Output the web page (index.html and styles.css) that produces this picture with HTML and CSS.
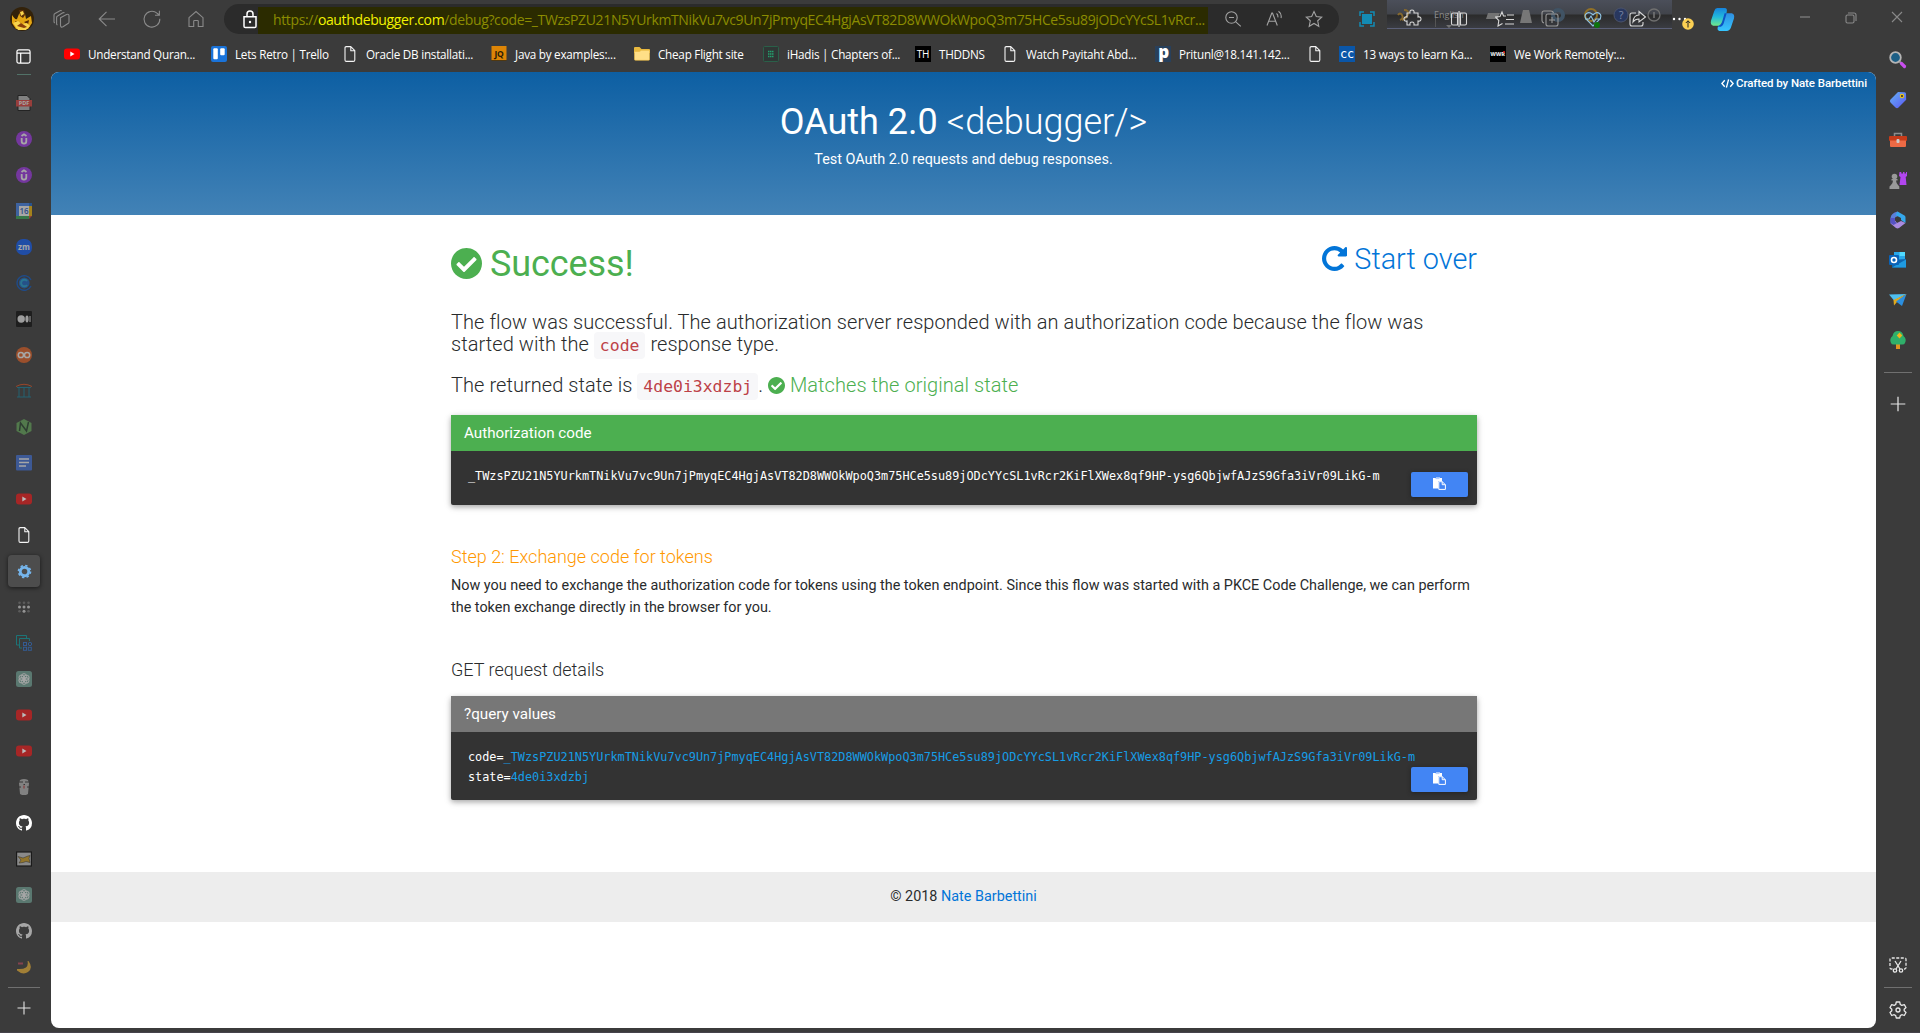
FILE: index.html
```html
<!DOCTYPE html>
<html lang="en">
<head>
<meta charset="utf-8">
<title>OAuth 2.0 debugger</title>
<link rel="stylesheet" href="styles.css">
</head>
<body>
<svg class="defs" width="0" height="0">
  <symbol id="check" viewBox="8 8 496 496"><path d="M504 256c0 136.967-111.033 248-248 248S8 392.967 8 256 119.033 8 256 8s248 111.033 248 248zM227.314 387.314l184-184c6.248-6.248 6.248-16.379 0-22.627l-22.627-22.627c-6.248-6.249-16.379-6.249-22.628 0L216 308.118l-70.059-70.059c-6.248-6.248-16.379-6.248-22.628 0l-22.627 22.627c-6.248 6.248-6.248 16.379 0 22.627l104 104c6.249 6.249 16.379 6.249 22.628.001z"/></symbol>
  <symbol id="repeat" viewBox="128 128 1536 1536"><path d="M1664 256v448q0 26-19 45t-45 19h-448q-42 0-59-40-17-39 14-69l138-138q-148-137-349-137-104 0-198.500 40.500t-163.500 109.500-109.500 163.500-40.500 198.500 40.500 198.500 109.500 163.500 163.500 109.500 198.500 40.500q119 0 225-52t179-147q7-10 23-12 15 0 25 9l137 138q9 8 9.500 20.500t-7.500 22.500q-109 132-264 204.500t-327 72.500q-156 0-298-61t-245-164-164-245-61-298 61-298 164-245 245-164 298-61q147 0 284.500 55.500t244.500 156.500l130-129q29-31 70-14 39 17 39 59z"/></symbol>
  <symbol id="paste" viewBox="0 0 13 13"><path fill="#fff" d="M0 1h3V.4h4V1h2v3H5.500v7.500H0z"/><path fill="#9fc3ff" d="M2.500 1.200h4v.9h-4z"/><path fill="#4285f4" stroke="#fff" d="M5.800 4.700h3.400l3.200 3v4.700H5.800z"/><path fill="none" stroke="#fff" d="M9.200 4.700v3h3.200"/></symbol>
  <symbol id="doc" viewBox="0 0 16 16"><path fill="none" stroke="#f4f4f4" stroke-width="1.100" stroke-linejoin="round" d="M3.500.6h5.300l4 4v9.300q0 1.500-1.500 1.500h-7Q3 15.400 3 13.900V2Q3 .6 4.300.6M8.800.8v3.900h3.900"/></symbol>
  <symbol id="yt" viewBox="0 0 16 16"><rect y="2.500" width="16" height="11" rx="3"/><path fill="#fff" d="m6.300 5.600 4.200 2.400-4.200 2.400z"/></symbol>
  <symbol id="udemy" viewBox="0 0 16 16"><circle cx="8" cy="8" r="8" fill="#a435f0"/><path fill="none" stroke="#fff" stroke-width="1.800" d="M5.700 7v3.300q0 2.300 2.300 2.300t2.300-2.300V7M5.500 5 8 3.300 10.500 5"/></symbol>
  <symbol id="github" viewBox="0 0 16 16"><path d="M8 0C3.580 0 0 3.580 0 8c0 3.540 2.290 6.530 5.470 7.590.4.070.550-.170.550-.380 0-.190-.010-.820-.010-1.490-2.010.370-2.530-.490-2.690-.940-.090-.230-.480-.940-.820-1.130-.280-.150-.680-.520-.010-.530.630-.010 1.080.580 1.230.820.720 1.210 1.870.870 2.330.660.070-.520.280-.870.510-1.070-1.780-.200-3.640-.890-3.640-3.950 0-.870.310-1.590.820-2.150-.080-.200-.360-1.020.080-2.120 0 0 .670-.210 2.200.820.640-.180 1.320-.270 2-.270s1.360.090 2 .270c1.530-1.040 2.200-.820 2.200-.820.440 1.100.160 1.920.080 2.120.510.560.820 1.270.820 2.150 0 3.070-1.870 3.750-3.650 3.950.290.250.540.730.540 1.480 0 1.070-.010 1.930-.010 2.200 0 .210.150.460.550.380A8.010 8.010 0 0 0 16 8c0-4.420-3.580-8-8-8z"/></symbol>
  <symbol id="gpt" viewBox="0 0 16 16"><rect width="16" height="16" rx="2.500" fill="#74aa9c"/><g fill="none" stroke="#fff" stroke-width=".9"><ellipse cx="8" cy="5.600" rx="2.600" ry="3"/><ellipse cx="8" cy="5.600" rx="2.600" ry="3" transform="rotate(60 8 8)"/><ellipse cx="8" cy="5.600" rx="2.600" ry="3" transform="rotate(120 8 8)"/><ellipse cx="8" cy="5.600" rx="2.600" ry="3" transform="rotate(180 8 8)"/><ellipse cx="8" cy="5.600" rx="2.600" ry="3" transform="rotate(240 8 8)"/><ellipse cx="8" cy="5.600" rx="2.600" ry="3" transform="rotate(300 8 8)"/></g></symbol>
  <symbol id="plus" viewBox="0 0 16 16"><path fill="none" stroke="#e4e4e4" stroke-width="1.100" d="M8 1.500v13M1.500 8h13"/></symbol>
</svg>

<header class="toolbar">
  <div class="nav">
    <svg class="avatar" viewBox="0 0 24 24"><circle cx="12" cy="12" r="12" fill="#33220a"/><path fill="#e4a613" d="M2 8q3 5 5 4l2-5q3-4 6 0l1 5 5-3 1 7-4 6H6l-4-6z"/><path fill="#5b2c08" d="M9 3h5l1 5-2 3-3-2zM5 14l6 2-3 3zM14 15l5-2-1 5z"/><path fill="#f8d44c" d="m10 5 3-1 1 3-3 2zM3 16l5-2 4 3 5-1 3 3-4 4H8z"/><path fill="#8a3f0a" d="m7 19 4-3 6 4-3 1z"/></svg>
    <svg class="ico dim" viewBox="0 0 20 20"><path d="m3 4.500 5-2.800q1-.5 1.800.2M3 4.500Q2 5 2 6v6.500q0 1 .8 1.500M5.600 7l5.200-3.200q1-.5 1.700.1M5.600 7q-1 .5-1 1.500v6q0 1 .8 1.600M8.500 8.800l6-3.400q2.500-.8 2.500 1.500v6q0 1-1 1.600L11 17.800q-2.500 1-2.500-1.500z"/></svg>
    <svg class="ico dim" viewBox="0 0 20 20"><path d="M18 10H2.300M9.500 2.800 2.200 10l7.300 7.200"/></svg>
    <svg class="ico dim" viewBox="0 0 20 20"><path d="M17.800 9.800A7.900 7.900 0 1 1 15 4.200l2 1.600M17.400 1.800v4.400H13"/></svg>
    <svg class="ico dim" viewBox="0 0 20 20"><path d="m3 8.700 7-6.200 7 6.200v8.800h-4.700v-5.200q0-.8-.8-.8H8.500q-.8 0-.8.8v5.200H3z"/></svg>
  </div>
  <div class="address">
    <svg class="lock" viewBox="0 0 16 20"><path fill="none" stroke="#fff" stroke-width="1.500" d="M2 7.700h12v9.500q0 1.300-1.300 1.300H3.300Q2 18.500 2 17.200zM5 7.500V5a3 3 0 0 1 6 0v2.500"/><circle cx="8" cy="13" r="1.200" fill="#fff"/></svg>
    <div class="url">https://<b>oauthdebugger.com</b>/debug?code=_TWzsPZU21N5YUrkmTNikVu7vc9Un7jPmyqEC4HgjAsVT82D8WWOkWpoQ3m75HCe5su89jODcYYcSL1vRcr...</div>
    <div class="tools">
      <svg class="ico mid" viewBox="0 0 20 20"><circle cx="8.500" cy="8.500" r="5.700"/><path d="m12.800 12.800 5 4.500M6 8.500h5"/></svg>
      <svg class="ico mid" viewBox="0 0 20 20"><path d="M3 16.500 7.800 4h.7l4.800 12.500M4.700 12.300h7M12.500 4.500q1.800 1.500 1.300 3.800M14.500 2.300q3.500 2.500 2.500 6.700"/></svg>
      <svg class="ico mid" viewBox="0 0 20 20"><path d="m10 2.500 2.300 5 5.400.6-4 3.700 1.100 5.500-4.800-2.800-4.800 2.800 1.100-5.500-4-3.700 5.400-.6z"/></svg>
    </div>
  </div>
  <div class="actions">
    <svg class="ico" viewBox="0 0 20 20"><rect x="5" y="5" width="10" height="10" fill="#138bb4"/><path stroke="#138bb4" stroke-width="1.500" d="M3 7V3h4M13 3h4v4M17 13v4h-4M7 17H3v-4"/></svg>
    <svg class="ico lit" viewBox="0 0 20 20"><path d="M5 4h3q-.5-3 2-3t2 3h4v4q3-.6 3 2t-3 2v4h-4q.5-3-2-3t-2 3H5v-4q-3 .5-3-2t3-2z"/></svg>
    <svg class="ico lit" viewBox="0 0 20 20"><path d="M8.500 4H4Q2.500 4 2.500 5.500v9Q2.500 16 4 16h4.500zM11.500 4H16q1.500 0 1.500 1.500v9q0 1.500-1.500 1.500h-4.500zM10 2v16"/></svg>
    <svg class="ico lit" viewBox="0 0 20 20"><path d="M11 7H8.500L7 3 5 7.500l-4.500.6 3.300 3.400L3 17l4.500-2.500M12 6h7M11 10.500h8M10 15h9"/></svg>
    <svg class="ico soft" viewBox="0 0 20 20"><path d="M8 5h8q2 0 2 2v8q0 2-2 2H8q-2 0-2-2V7q0-2 2-2zM12 8v6M9 11h6M4 14q-2-.5-2-2.500V4q0-2 2-2h7q2 0 2.500 2"/></svg>
    <svg class="ico lit" viewBox="0 0 20 20"><path d="M10 17 3 10Q.8 6.500 3.500 4.500T9 5l1 1 1-1q3-2.500 5.500-.5T17 10zM2 10h4l2-3 3 6 2-3h5" stroke="#8fc4e4"/><circle cx="14" cy="16" r="3" fill="#0d720d" stroke="none"/></svg>
    <svg class="ico lit" viewBox="0 0 20 20"><path d="M9 4H5Q3 4 3 6v9q0 2 2 2h9q2 0 2-2v-2M12 2.500 18.500 8 12 13v-3q-4 0-6 3 .5-7 6-7z"/></svg>
    <svg class="ico" viewBox="0 0 20 20"><g fill="#fff"><circle cx="4" cy="10" r="1.200"/><circle cx="9.500" cy="10" r="1.200"/><circle cx="15" cy="10" r="1.200"/></g></svg>
    <svg class="copilot" viewBox="0 0 24 24"><defs><linearGradient id="cg" x1="0" y1="0" x2="0" y2="1"><stop offset="0" stop-color="#1683dd"/><stop offset=".5" stop-color="#22b9dc"/><stop offset="1" stop-color="#6fe88c"/></linearGradient><linearGradient id="cb" x1="0" y1="0" x2="0" y2="1"><stop offset="0" stop-color="#2f8fe0"/><stop offset="1" stop-color="#36c6ff"/></linearGradient></defs><path fill="url(#cg)" d="M7 1h7q3 0 2 4l-3 10q-1 3-4 3H3q-3-1-2-5l3-9q1-3 3-3z"/><path fill="url(#cb)" d="M15 6h6q3 1 2 5l-3 9q-1 3-4 3H9q-3-1-1-5h2q2 0 3-4z"/><path fill="#0b53c5" d="m14 6 2 0-3 10q-1 3-4 3H7q4-2 5-6z"/></svg>
    <span></span>
    <svg class="ico dim" viewBox="0 0 20 20"><path d="M5 8h10"/></svg>
    <svg class="ico dim" viewBox="0 0 20 20"><path d="M7 4h6q2 0 2 2v6M6.500 6h5q1.500 0 1.500 1.500v5q0 1.500-1.500 1.500h-5Q5 14 5 12.500v-5Q5 6 6.500 6z"/></svg>
    <svg class="ico dim" viewBox="0 0 20 20"><path d="m5 3 10 10M15 3 5 13"/></svg>
  </div>
  <div class="imebar"><svg viewBox="0 0 285 29"><path fill="none" stroke="#87692d" stroke-width="2" d="M11 15q2-3 4 0t-2 5M17 10q5 0 4 4t-6 6"/><path stroke="#555" d="M48.500 15v12"/><path fill="#737373" d="M59 25h6l-3 3zM101 13h12l-3 6h-11z"/><path fill="#777" d="M136 10h6l1 4 2 9h-12l2-9z"/><g fill="none" stroke="#405364" stroke-width="4"><circle cx="171" cy="15" r="5"/></g><circle cx="204" cy="15" r="6" fill="none" stroke="#927126" stroke-width="2"/><circle cx="234" cy="15" r="7" fill="#28375f" stroke="#4b536b"/><circle cx="267" cy="15" r="6" fill="none" stroke="#707070" stroke-width="1.300"/><path stroke="#777" stroke-width="1.500" d="M267 12v6"/><text x="234" y="19" text-anchor="middle" font-family="Open Sans" font-size="11" fill="#7a86a6">?</text><text x="47" y="18" font-family="Open Sans" font-size="9" fill="#8a8a8a">English</text></svg></div>
  <svg class="badge" viewBox="0 0 12 12"><circle cx="6" cy="6" r="5.800" fill="#fcd053"/><path fill="none" stroke="#222" d="M6 9.500V2.800M3.800 5 6 2.800 8.200 5"/></svg>
</header>

<div class="window">
  <aside class="tabs">
    <svg class="toggle" viewBox="0 0 16 16"><path fill="none" stroke="#fff" stroke-width="1.300" d="M3 1h10q2 0 2 2v10q0 2-2 2H3q-2 0-2-2V3q0-2 2-2zM1 4.500h14M5 4.500V15"/></svg>
    <i class="mark"></i>
    <div class="tab"><svg viewBox="0 0 16 16"><path fill="#bbb" stroke="#111" d="M2 .5h9l3 3v12H2z"/><path fill="#e5413c" d="M0 5h16v6.500H0z"/><text x="8" y="10.200" text-anchor="middle" font-family="Open Sans" font-weight="700" font-size="5.500" fill="#fff">PDF</text></svg></div>
    <div class="tab"><svg><use href="#udemy"/></svg></div>
    <div class="tab"><svg><use href="#udemy"/></svg></div>
    <div class="tab"><svg viewBox="0 0 16 16"><path fill="#4285f4" d="M0 0h13v3H3v10H0z"/><path fill="#fbbc04" d="M13 3h3v10h-3z"/><path fill="#34a853" d="M0 13h13v3H0z"/><path fill="#1967d2" d="M13 0h3v3h-3z"/><path fill="#ea4335" d="M13 13h3l-3 3z"/><path fill="#fff" d="M3 3h10v10H3z"/><text x="8" y="11" text-anchor="middle" font-family="Open Sans" font-weight="600" font-size="8" fill="#1a56c4">16</text></svg></div>
    <div class="tab"><svg viewBox="0 0 16 16"><rect width="16" height="16" rx="7" fill="#0b5cff"/><text x="8" y="10.700" text-anchor="middle" font-family="Open Sans" font-weight="700" font-size="8" fill="#fff">zm</text></svg></div>
    <div class="tab"><svg viewBox="0 0 16 16"><path fill="none" stroke="#0a58c4" stroke-width="1.400" d="M15 5a7.300 7.300 0 1 0 0 6"/><circle cx="8.200" cy="8" r="5.400" fill="#1464c8"/><path fill="none" stroke="#1ba4d8" stroke-width="2" d="M11 6a3.300 3.300 0 1 0 0 4"/></svg></div>
    <div class="tab"><svg viewBox="0 0 16 16"><rect width="16" height="16" rx="1" fill="#080808"/><circle cx="5.200" cy="8" r="3.700" fill="#eee"/><ellipse cx="11" cy="8" rx="1.600" ry="3.400" fill="#eee"/><path stroke="#eee" d="M14 5v6"/></svg></div>
    <div class="tab"><svg viewBox="0 0 16 16"><circle cx="8" cy="8" r="8" fill="#eb6120"/><g fill="none" stroke="#fff" stroke-width="1.500"><circle cx="4.900" cy="8" r="2.600"/><circle cx="11.100" cy="8" r="2.600"/></g></svg></div>
    <div class="tab"><svg viewBox="0 0 16 16"><path fill="none" stroke="#e4511f" d="M0 3.500Q8-1 16 3.500"/><path fill="none" stroke="#13829f" d="M1 4.500h14M3 5v9M8 5v9M13 5v9M1 14h14"/></svg></div>
    <div class="tab"><svg viewBox="0 0 16 16"><path fill="#65ac5b" d="m8 0 7.500 4v8L8 16 .5 12V4z"/><path fill="none" stroke="#25402b" stroke-width="1.500" d="m3.500 12 1-8 6 8 2-9"/></svg></div>
    <div class="tab"><svg viewBox="0 0 16 16"><rect width="16" height="15.500" rx="1" fill="#3f72e0"/><path stroke="#fff" stroke-width="1.500" d="M3 4h10M3 7.500h10M3 11h7"/></svg></div>
    <div class="tab red"><svg><use href="#yt"/></svg></div>
    <div class="tab on"><svg><use href="#doc"/></svg></div>
    <div class="tab on sel"><svg viewBox="0 0 16 16"><circle cx="8" cy="8" r="4.500" fill="none" stroke="#75b5ec" stroke-width="3"/><circle cx="8" cy="8" r="6.400" fill="none" stroke="#75b5ec" stroke-width="1.800" stroke-dasharray="2.510"/></svg></div>
    <div class="tab"><svg viewBox="0 0 16 16"><g fill="#ddd"><circle cx="3.500" cy="8" r="1.500"/><circle cx="8" cy="8" r="1.500"/><circle cx="12.500" cy="8" r="1.500"/><circle cx="8" cy="12.300" r="1.500"/></g><g fill="#777"><circle cx="3.500" cy="3.700" r="1.300"/><circle cx="8" cy="3.700" r="1.300"/><circle cx="12.500" cy="3.700" r="1.300"/><circle cx="3.500" cy="12.300" r="1.300"/><circle cx="12.500" cy="12.300" r="1.300"/></g></svg></div>
    <div class="tab"><svg viewBox="0 0 16 16"><g fill="none"><path stroke="#04a4a8" d="M3 10H.5V.5h10V3M6 13H3.500V3.500h10V6"/><g stroke="#2f76d8"><rect x="7.500" y="7.500" width="3" height="3"/><rect x="7.500" y="12.300" width="3" height="3"/><circle cx="14" cy="9" r="1.700"/><rect x="12.300" y="12.300" width="3" height="3"/></g></g></svg></div>
    <div class="tab"><svg><use href="#gpt"/></svg></div>
    <div class="tab red"><svg><use href="#yt"/></svg></div>
    <div class="tab red"><svg><use href="#yt"/></svg></div>
    <div class="tab"><svg viewBox="0 0 16 16"><path fill="#bbb" d="M4 1q4-2 8 0l1 3-1 11-2 1H6l-2-1L3 4z"/><path stroke="#333" d="M3 3h4M9 3h4M7.500 5.500h1.500M2 8h3M11 8h3"/><path stroke="#c22" d="M8 6.500v3"/></svg></div>
    <div class="tab on gh"><svg><use href="#github"/></svg></div>
    <div class="tab"><svg viewBox="0 0 16 16"><rect x=".6" y="1" width="14.800" height="14" fill="#ccc" stroke="#000" stroke-width="1.200"/><path fill="#d9a520" stroke="#222" stroke-width=".5" d="m2 5.500 5 1.500 5-2 2-.5-1 3 1 4-4-1-3 1-4 .5 2-3z"/></svg></div>
    <div class="tab"><svg><use href="#gpt"/></svg></div>
    <div class="tab gh"><svg><use href="#github"/></svg></div>
    <div class="tab"><svg viewBox="0 0 16 16"><path fill="#f5b732" d="M12.500 2q5 7-.5 11-5 3.500-11-1.500v-1.500q6 .5 9-1.500 2.500-2.500 1.500-6.500z"/><path stroke="#c0485e" stroke-width="2" d="M2 4.500h5"/></svg></div>
    <i class="rule"></i>
    <svg class="add"><use href="#plus"/></svg>
  </aside>

  <div class="center">
    <nav class="bookmarks">
      <a class="yt"><svg><use href="#yt"/></svg><span>Understand Quran...</span></a>
      <a><svg viewBox="0 0 16 16"><rect width="16" height="16" rx="2" fill="#1a73d9"/><rect x="2.300" y="2.300" width="4.500" height="11" rx="1" fill="#fff"/><rect x="9.200" y="2.300" width="4.500" height="7" rx="1" fill="#fff"/></svg><span>Lets Retro | Trello</span></a>
      <a><svg><use href="#doc"/></svg><span>Oracle DB installati...</span></a>
      <a><svg viewBox="0 0 16 16"><path fill="#dd8506" d="M.5 0h15v14H.5z"/><path fill="#503810" d="M.5 14h15v1H.5z"/><text x="8" y="10.500" text-anchor="middle" font-family="Open Sans" font-weight="700" font-size="8.500" fill="#281a06">JQ</text></svg><span>Java by examples:...</span></a>
      <a><svg viewBox="0 0 16 16"><path fill="#e9b93f" d="M0 2q0-1 1-1h4.500l2 2H15q1 0 1 1v3H0z"/><path fill="#ffdf87" stroke="#e9b93f" stroke-width=".6" d="M.4 5.500h5l2-1.200h8.200v9q0 1-1 1H1.400q-1 0-1-1z"/></svg><span>Cheap Flight site</span></a>
      <a><svg viewBox="0 0 16 16"><rect x=".5" y=".5" width="15" height="15" rx="1" fill="#303735" stroke="#2a6049"/><path stroke="#23a06e" stroke-width="1.500" stroke-dasharray="1.500 .5" d="M5 5.500h6M5 8h6M5 10.500h6"/></svg><span>iHadis | Chapters of...</span></a>
      <a><svg viewBox="0 0 16 16"><path d="M0 0h16v16H0z"/><text x="8" y="11.500" text-anchor="middle" font-family="Open Sans" font-size="10" fill="#fff">TH</text></svg><span>THDDNS</span></a>
      <a><svg><use href="#doc"/></svg><span>Watch Payitaht Abd...</span></a>
      <a><svg viewBox="0 0 16 16"><path fill="#28405b" d="M0 0h16v16H0z"/><text x="8.500" y="12" text-anchor="middle" font-family="Open Sans" font-weight="800" font-size="17" fill="#fff">p</text></svg><span>Pritunl@18.141.142...</span></a>
      <a><svg><use href="#doc"/></svg></a>
      <a><svg viewBox="0 0 16 16"><path fill="#0a56a8" d="M0 0h16v16H0z"/><text x="8" y="11.500" text-anchor="middle" font-family="DejaVu Sans Mono" font-size="12" fill="#fff">cc</text></svg><span>13 ways to learn Ka...</span></a>
      <a><svg viewBox="0 0 16 16"><path d="M0 0h16v16H0z"/><text x="7.500" y="10.300" text-anchor="middle" font-family="Open Sans" font-weight="800" font-size="5.500" fill="#ddd">WWR</text><circle cx="14" cy="6" r="1" fill="#e22"/></svg><span>We Work Remotely:...</span></a>
    </nav>

    <main class="page">
      <section class="hero">
        <div class="crafted"><svg viewBox="0 0 14 12"><path fill="none" stroke="#fff" stroke-width="1.500" d="M4 2.500.9 6 4 9.500M10 2.500 13.100 6 10 9.500M8.200 1.500l-2.400 9"/></svg><span>Crafted by Nate Barbettini</span></div>
        <h1>OAuth 2.0 <em>&lt;debugger/&gt;</em></h1>
        <p>Test OAuth 2.0 requests and debug responses.</p>
      </section>
      <section class="content">
        <div class="status">
          <h2><svg><use href="#check"/></svg><span>Success!</span></h2>
          <a class="restart"><svg><use href="#repeat"/></svg><span>Start over</span></a>
        </div>
        <p class="lead">The flow was successful. The authorization server responded with an authorization code because the flow was<br>started with the <code>code</code> response type.</p>
        <p class="lead">The returned state is <code>4de0i3xdzbj</code>. <span class="ok"><svg><use href="#check"/></svg> Matches the original state</span></p>
        <div class="card green">
          <div class="card-head">Authorization code</div>
          <div class="card-body"><pre>_TWzsPZU21N5YUrkmTNikVu7vc9Un7jPmyqEC4HgjAsVT82D8WWOkWpoQ3m75HCe5su89jODcYYcSL1vRcr2KiFlXWex8qf9HP-ysg6QbjwfAJzS9Gfa3iVr09LikG-m</pre><button><svg><use href="#paste"/></svg></button></div>
        </div>
        <h3 class="step">Step 2: Exchange code for tokens</h3>
        <p class="text">Now you need to exchange the authorization code for tokens using the token endpoint. Since this flow was started with a PKCE Code Challenge, we can perform<br>the token exchange directly in the browser for you.</p>
        <h3 class="details">GET request details</h3>
        <div class="card grey">
          <div class="card-head">?query values</div>
          <div class="card-body"><pre>code=<span>_TWzsPZU21N5YUrkmTNikVu7vc9Un7jPmyqEC4HgjAsVT82D8WWOkWpoQ3m75HCe5su89jODcYYcSL1vRcr2KiFlXWex8qf9HP-ysg6QbjwfAJzS9Gfa3iVr09LikG-m</span>
state=<span>4de0i3xdzbj</span></pre><button><svg><use href="#paste"/></svg></button></div>
        </div>
      </section>
      <footer>© 2018 <a>Nate Barbettini</a></footer>
    </main>
  </div>

  <aside class="apps">
    <svg viewBox="0 0 18 18"><circle cx="6.500" cy="6.500" r="5.300" fill="#1d5f86" stroke="#b5b5b5" stroke-width="1.800"/><path stroke="#999" stroke-width="2" d="m10.500 10.500 2 2"/><path stroke="#c94ef0" stroke-width="3.200" stroke-linecap="round" d="m12.500 12.500 3 3"/></svg>
    <svg viewBox="0 0 18 18"><defs><linearGradient id="tg" x1="0" y1="0" x2="1" y2="1"><stop offset="0" stop-color="#66b4f4"/><stop offset="1" stop-color="#5a55f4"/></linearGradient></defs><path fill="url(#tg)" d="m9 1 6.500.2q1.500 0 1.500 1.500l.2 6L9.500 16.500q-1.500 1.300-3 0l-5-5q-1.300-1.500 0-3z"/><circle cx="13" cy="5" r="1.700" fill="#333" stroke="#e8c11c" stroke-width="1.200"/></svg>
    <svg viewBox="0 0 18 18"><path fill="none" stroke="#8d8d8d" stroke-width="1.500" d="M5.500 5V2.500h7V5"/><rect y="5" width="18" height="5" rx="1" fill="#c73b19"/><path fill="#ed6a45" d="M1 9.500h16V15q0 1-1 1H2q-1 0-1-1z"/><rect x="7.500" y="8" width="3" height="4" rx="1" fill="#ccc"/></svg>
    <svg viewBox="0 0 18 18"><path fill="#b246ef" d="M10.500 1h1.800v1.500H14V1h1.500v1.500H17V1h1v4l-1.300 1 .8 8h-7l1-8-1.500-1z"/><circle cx="5.500" cy="5.500" r="2.800" fill="#999"/><path fill="#999" d="M2.500 8h6v1.500H7q.3 3 2 4.500l1.300 1.500V18H.5v-2.500L2 14q2-2 2-4.500H2.500z"/></svg>
    <svg viewBox="0 0 18 18"><path fill="#5b7fd8" d="M8.500.5Q2 2 1.500 7v5.500L6 10V6.500L11 4z"/><path fill="#35a8ec" d="m8.500.5 7 4q1 .7 1 2V12L12 9V7L6.500 4z"/><path fill="#a98be0" d="m1.500 12.500 4.500-3 2 2.500 4-2 4.500 2L10 17q-1.500.8-3 0z"/><path fill="#5653c4" d="m1.500 7 4.500 0v3.500L8 12l-3.500 2-3-2z"/></svg>
    <svg viewBox="0 0 18 18"><path fill="#28a8ea" d="M5 1h11v8H5z"/><path fill="#50d9ff" d="M10.500 1H16v4h-5.500z"/><path fill="#0f64ad" d="m3 9 14-1v8.500H3z"/><path fill="#1f9ae0" d="m3 16.500 14-8v8z"/><rect y="4" width="10" height="10" rx="1" fill="#0a63b8"/><circle cx="5" cy="9" r="2.500" fill="none" stroke="#fff" stroke-width="1.600"/></svg>
    <svg viewBox="0 0 18 18"><path fill="#4dbef0" d="M0 3.500 17.500 3 5 9.500z"/><path fill="#e0a91e" d="m17.500 3-13 6 .5 5.500L8 11z"/><path fill="#2b8fe0" d="M17.500 3 13 15l-6-4.500z"/></svg>
    <svg viewBox="0 0 18 18"><path fill="#e09320" d="M7 13h4v5H7z"/><path fill="#2faf6a" d="M9 0q4.500 0 5.500 5 3.500 3 1.500 7-.7 1.500-2.500 1.500h-9Q2.700 13.500 2 12q-2-4 1.500-7Q4.500 0 9 0z"/><path fill="#f0b41c" d="m10.500 1.500 2.800 3-2.800 3-2.800-3z"/></svg>
    <i class="rule"></i>
    <svg class="add"><use href="#plus"/></svg>
    <div class="bottom">
      <svg viewBox="0 0 18 18"><g fill="none" stroke="#e8e8e8" stroke-width="1.300"><path stroke-dasharray="3 1.500" d="M3.500 13H2.500Q1 13 1 11.500v-8Q1 2 2.500 2h13Q17 2 17 3.500v8q0 1.500-1.500 1.500h-1"/><path d="m6 5 5 8M12 5l-5 8"/><circle cx="6" cy="14.500" r="1.700"/><circle cx="12" cy="14.500" r="1.700"/></g></svg>
      <i class="rule"></i>
      <svg viewBox="0 0 18 18"><g fill="none" stroke="#e8e8e8" stroke-width="1.300"><path stroke-linejoin="round" d="M7.300 1h3.400l.6 2.500 1.500.9 2.500-.8L17 6.500 15.200 8.300v1.500L17 11.500l-1.700 3-2.500-.8-1.500.9-.6 2.400H7.300l-.6-2.400-1.500-.9-2.500.8-1.700-3 1.800-1.700V8.300L1 6.500l1.700-2.900 2.500.8 1.500-.9z"/><circle cx="9" cy="9" r="2"/></g></svg>
    </div>
  </aside>
</div>
</body>
</html>
```
FILE: styles.css
```css
* { box-sizing: border-box; }
body { margin: 0; width: 1920px; height: 1033px; overflow: hidden; background: #3b3b3b; font-family: "Open Sans", sans-serif; display: flex; flex-direction: column; }
h1, h2, h3, p, pre { margin: 0; font-weight: 400; }
.defs { position: absolute; }
svg { flex: none; display: block; }

.toolbar { height: 38px; display: flex; position: relative; flex: none; }
.nav { width: 224px; padding-left: 10px; display: grid; grid-template-columns: 30px repeat(4, 44.7px); align-items: center; justify-items: center; }
.avatar { width: 24px; height: 24px; margin-left: -7px; }
.ico { width: 20px; height: 20px; fill: none; stroke-width: 1.1; }
.dim { stroke: #8a8a8a; }
.mid { stroke: #a3a3a3; }
.lit { stroke: #d8d8d8; position: relative; z-index: 2; }
.soft { stroke: #9a9a9a; position: relative; z-index: 2; }
.address { width: 1115px; height: 30px; margin-top: 4px; border-radius: 15px; background: #2b2b2b; display: flex; align-items: center; }
.lock { width: 16px; height: 20px; margin-left: 18px; }
.url { width: 950px; height: 27px; margin: 3px 0 0; padding-left: 15px; background: #2b2b00; color: #8c8c00; font-size: 14px; letter-spacing: -.36px; line-height: 25px; white-space: nowrap; }
.url b { font-weight: 400; color: #f2f200; }
.tools { flex: 1; display: grid; grid-template-columns: repeat(3, 40.5px); padding-left: 5px; justify-items: center; }
.actions { padding-left: 5px; display: grid; grid-template-columns: 45px 45px 49px 44px 45px 41px 47px 40px 44px 38px 46px 46px 46px; align-items: center; justify-items: center; }
.copilot { width: 25px; height: 25px; }
.imebar { position: absolute; left: 1387px; top: 0; width: 285px; height: 29px; background: linear-gradient(#4b4f5a, #41444b 14px, #2b2b2b 15px, #3a3c42 28px, #5b6078 28px); }
.imebar svg { width: 285px; height: 29px; }
.badge { position: absolute; left: 1682px; top: 18px; width: 12px; height: 12px; }

.window { flex: 1; display: grid; grid-template-columns: 51px 1825px 44px; min-height: 0; border-bottom: 1px solid #46434b; }
.tabs { display: flex; flex-direction: column; align-items: center; padding-right: 3px; }
.toggle { width: 15px; height: 15px; margin: 11px 2px 10px 0; }
.mark { width: 14px; height: 1px; background: #527268; margin-bottom: 12px; flex: none; }
.tab { width: 32px; height: 32px; margin-bottom: 4px; display: grid; place-items: center; border-radius: 4px; flex: none; }
.tab svg { width: 16px; height: 16px; opacity: .55; }
.tab.on svg { opacity: 1; }
.tab.red { fill: #e01b1b; }
.tab.red svg { opacity: .65; }
.tab.gh { fill: #fff; }
.sel { background: #4d4d4d; box-shadow: 0 1px 4px #1a1a1a; }
.tab.sel svg { width: 15px; height: 15px; }
.rule { height: 1px; background: #707070; width: 32px; flex: none; }
.add { width: 16px; height: 16px; }
.tabs .add { margin-top: 12px; }

.center { display: flex; flex-direction: column; min-height: 0; }
.bookmarks { height: 34px; padding: 0 0 3px 13px; display: grid; grid-template-columns: 147px 131px 149px 143px 129px 152px 87px 153px 152px 32px 151px 150px; align-items: center; color: #fff; font-size: 11.7px; letter-spacing: -.24px; white-space: nowrap; }
.bookmarks a { display: flex; align-items: center; gap: 8px; }
.bookmarks svg { width: 16px; height: 16px; }
.bookmarks .yt { fill: #f00; }

.page { height: 956px; background: #fff; border-radius: 8px; overflow: hidden; font-family: Roboto, sans-serif; color: #292b2c; font-size: 14.4px; }
.hero { height: 143px; position: relative; background: linear-gradient(#0d5fa3, #4282b6); color: #fff; text-align: center; padding-top: 29px; }
.hero h1 { font-size: 36px; line-height: 43px; }
.hero em { font-style: normal; font-weight: 300; }
.hero p { line-height: 22px; margin-top: 5px; }
.crafted { position: absolute; right: 9px; top: 4px; display: flex; align-items: center; gap: 2px; font-size: 11.500px; font-weight: 500; letter-spacing: -.08px; line-height: 14px; }
.crafted svg { width: 13px; height: 11px; }
.content { width: 1026px; margin-left: 400px; height: 657px; }
.status { display: flex; justify-content: space-between; padding-top: 26px; height: 96px; }
.status h2 { display: flex; align-items: center; gap: 8px; height: 44px; color: #4caf50; fill: #4caf50; font-size: 36px; letter-spacing: -.1px; }
.status h2 span { padding-top: 2px; }
.status h2 svg { width: 31px; height: 31px; }
.restart { display: flex; align-items: center; gap: 7px; height: 35px; color: #0275d8; fill: #0275d8; font-size: 28.800px; font-weight: 300; }
.restart svg { width: 25px; height: 25px; }
.lead { font-size: 20px; font-weight: 300; line-height: 22px; margin-bottom: 17px; letter-spacing: .062px; }
.lead code { font: 16.450px/22px "DejaVu Sans Mono", monospace; letter-spacing: 0; color: #bd4147; background: #f7f7f9; padding: 4px 6px; border-radius: 4px; }
.ok { color: #4caf50; fill: #4caf50; }
.ok svg { display: inline-block; width: 17px; height: 17px; vertical-align: -2px; }
.card { box-shadow: 0 2px 5px rgba(0,0,0,.26), 0 2px 8px rgba(0,0,0,.12); border-radius: 2px; background: #333; }
.card-head { height: 36px; padding-left: 13px; font-size: 15.200px; line-height: 36px; color: #fff; background: #4caf50; }
.grey .card-head { background: #777; }
.card-body { display: flex; justify-content: space-between; padding: 15px 9px 8px 17px; height: 54px; }
.grey .card-body { height: 68px; }
.card pre { font: 11.830px/20px "DejaVu Sans Mono", monospace; color: #fff; min-width: 0; flex: 1; }
.grey pre span { color: #169de6; }
.card button { width: 57px; height: 25px; flex: none; margin: 0; padding: 0; border: 0; border-radius: 2px; background: #4285f4; align-self: flex-end; display: grid; place-items: center; box-shadow: 0 1px 4px #222; }
.card button svg { width: 13px; height: 13px; margin-top: -3px; }
h3 { font-size: 18px; font-weight: 300; line-height: 22px; }
.step { color: #ff9800; margin-top: 41px; }
.text { line-height: 22px; margin-top: 7px; }
.details { margin: 40px 0 15px; }
footer { height: 50px; background: #ededed; text-align: center; line-height: 49px; }
footer a { color: #0275d8; }

.apps { display: flex; flex-direction: column; align-items: center; padding-top: 13px; }
.apps > svg { width: 18px; height: 18px; margin-bottom: 22px; }
.apps .rule { width: 28px; }
.apps > .rule { margin: 1px 0 22px; }
.bottom { margin-top: auto; padding-bottom: 13px; display: flex; flex-direction: column; align-items: center; gap: 13px; }
.bottom svg { width: 18px; height: 18px; }
```
